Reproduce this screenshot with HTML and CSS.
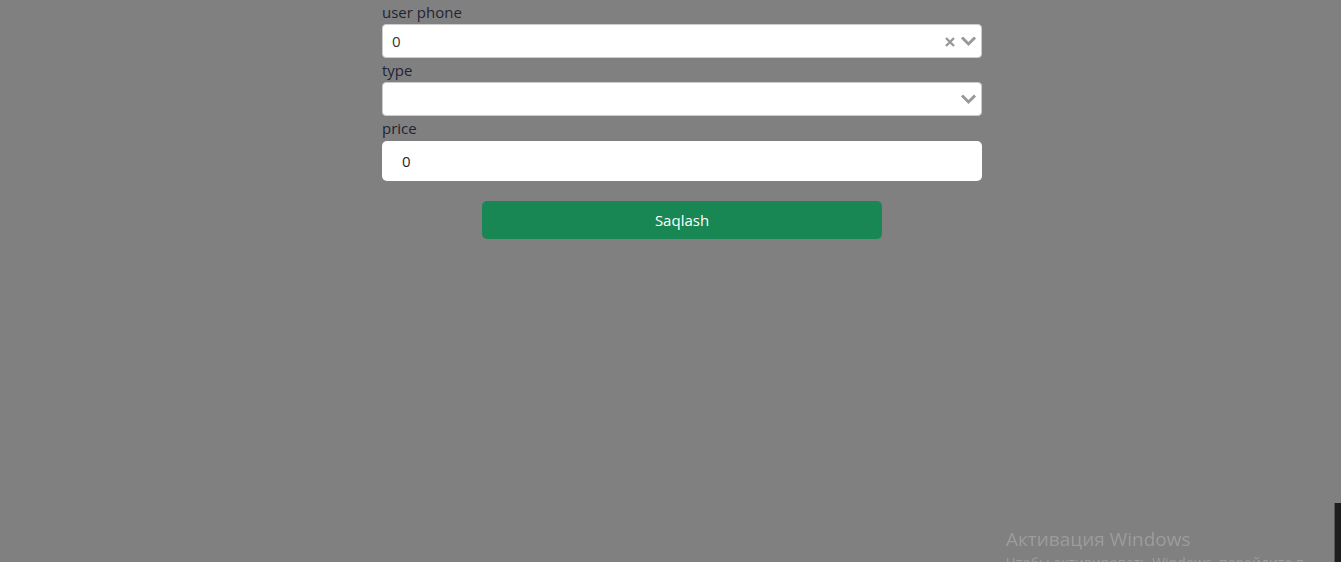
FILE: index.html
```html
<!DOCTYPE html>
<html lang="uz">
<head>
<meta charset="utf-8">
<title>Form</title>
<link rel="stylesheet" href="styles.css">
</head>
<body>
<div class="page">
  <form class="form">
    <label class="label">user phone</label>
    <div class="select">
      <span class="select-value">0</span>
      <span class="indicators">
        <svg class="clear" width="12" height="12" viewBox="0 0 12 12"><path d="M2 2 L10 10 M10 2 L2 10" stroke="#999" stroke-width="2.4" stroke-linecap="butt"/></svg>
        <svg class="chev" width="17" height="12" viewBox="0 0 17 12"><path d="M2 2.5 L8.5 9 L15 2.5" fill="none" stroke="#999" stroke-width="3"/></svg>
      </span>
    </div>
    <label class="label">type</label>
    <div class="select">
      <span class="select-value"></span>
      <span class="indicators">
        <svg class="chev" width="17" height="12" viewBox="0 0 17 12"><path d="M2 2.5 L8.5 9 L15 2.5" fill="none" stroke="#999" stroke-width="3"/></svg>
      </span>
    </div>
    <label class="label">price</label>
    <div class="input">0</div>
    <div class="actions">
      <button type="button" class="btn">Saqlash</button>
    </div>
  </form>
</div>
<div class="watermark">
  <div class="wm-title">Активация Windows</div>
  <div class="wm-sub">Чтобы активировать Windows, перейдите в</div>
</div>
<div class="edge"></div>
</body>
</html>
```
FILE: styles.css
```css
html, body {
  margin: 0;
  height: 100%;
  overflow: hidden;
}
body {
  background: #808080;
  font-family: "Open Sans", "Noto Sans", sans-serif;
  color: #212529;
}
.page {
  display: flex;
  justify-content: center;
  padding-left: 23px;
}
.form {
  width: 600px;
  display: flex;
  flex-direction: column;
}
.label {
  font-size: 15px;
  line-height: 24px;
  height: 24px;
  color: #1f2433;
}
.select {
  height: 34px;
  box-sizing: border-box;
  background: #fff;
  border: 1px solid #cccccc;
  border-radius: 4px;
  display: flex;
  align-items: center;
  padding-left: 9px;
}
.select + .label {
  margin-top: 0;
}
.select-value {
  flex: 1;
  font-size: 15px;
  color: #333;
}
.indicators {
  display: flex;
  align-items: center;
  gap: 4px;
  padding-right: 4px;
}
.clear { margin-top: 2px; }
.input {
  margin-top: 1px;
  height: 40px;
  box-sizing: border-box;
  background: #fff;
  border-radius: 5px;
  display: flex;
  align-items: center;
  padding-left: 20px;
  font-size: 15px;
  color: #212529;
}
.actions {
  display: flex;
  justify-content: center;
  padding-top: 20px;
}
.btn {
  width: 400px;
  height: 38px;
  background: #188754;
  border: none;
  border-radius: 5px;
  color: #fff;
  font-family: "Open Sans", "Noto Sans", sans-serif;
  font-size: 15px;
}
.watermark {
  position: fixed;
  left: 1006px;
  top: 527px;
  color: #9c9c9c;
  font-family: "Open Sans", "Noto Sans", sans-serif;
  white-space: nowrap;
}
.wm-title {
  font-size: 19px;
  line-height: 25px;
}
.wm-sub {
  font-size: 14px;
  line-height: 20px;
  margin-top: 1px;
}
.edge {
  position: fixed;
  left: 1334px;
  top: 503px;
  width: 7px;
  height: 59px;
  background: #1e1e1e;
  border-left: 1px solid #555;
  box-sizing: border-box;
}
```
